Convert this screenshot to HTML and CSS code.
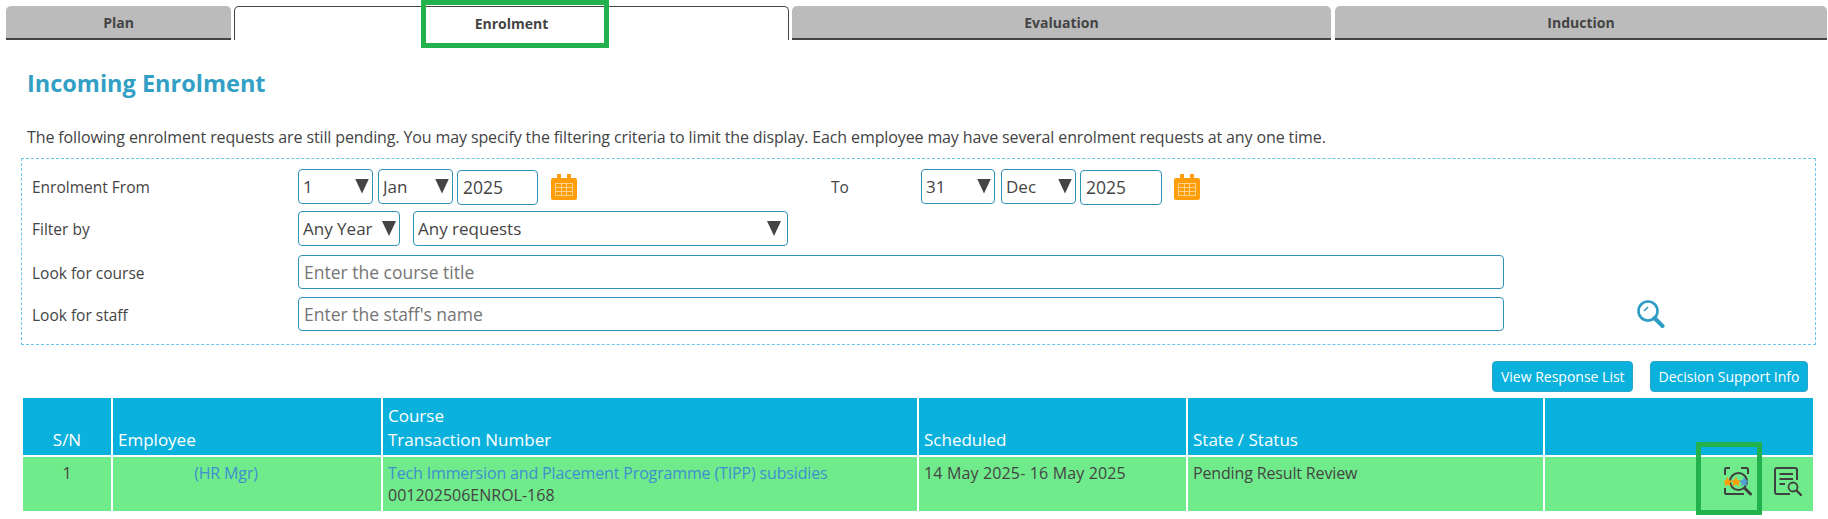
FILE: index.html
```html
<!DOCTYPE html>
<html lang="en">
<head>
<meta charset="utf-8">
<title>Incoming Enrolment</title>
<link rel="stylesheet" href="styles.css">
</head>
<body>
<nav class="tabs">
  <a class="tab tab-plan">Plan</a>
  <a class="tab tab-enrol active">Enrolment</a>
  <a class="tab tab-eval">Evaluation</a>
  <a class="tab tab-induct">Induction</a>
</nav>
<div class="highlight hl-tab"></div>
<h1 class="title">Incoming Enrolment</h1>
<p class="intro">The following enrolment requests are still pending. You may specify the filtering criteria to limit the display. Each employee may have several enrolment requests at any one time.</p>
<form class="filter">
  <div class="row row-date">
    <label class="lbl">Enrolment From</label>
    <div class="sel w-day"><select><option>1</option></select><span class="arrow"></span></div>
    <div class="sel w-mon"><select><option>Jan</option></select><span class="arrow"></span></div>
    <input class="inp w-year" value="2025">
    <svg class="cal" viewBox="0 0 26 26"><path fill="#ff9d0a" d="M6 0h4v4h6V0h4v4h4a2 2 0 0 1 2 2v18a2 2 0 0 1-2 2H2a2 2 0 0 1-2-2V6a2 2 0 0 1 2-2h4z"/><path fill="#ffd28a" d="M4 9h18v13H4z"/><path fill="#ff9d0a" d="M5 10h5v3H5zM11 10h4v3h-4zM16 10h5v3h-5zM5 14h5v3H5zM11 14h4v3h-4zM16 14h5v3h-5zM5 18h5v3H5zM11 18h4v3h-4zM16 18h5v3h-5z"/></svg>
    <label class="lbl lbl-to">To</label>
    <div class="sel w-day2"><select><option>31</option></select><span class="arrow"></span></div>
    <div class="sel w-mon2"><select><option>Dec</option></select><span class="arrow"></span></div>
    <input class="inp w-year2" value="2025">
    <svg class="cal" viewBox="0 0 26 26"><path fill="#ff9d0a" d="M6 0h4v4h6V0h4v4h4a2 2 0 0 1 2 2v18a2 2 0 0 1-2 2H2a2 2 0 0 1-2-2V6a2 2 0 0 1 2-2h4z"/><path fill="#ffd28a" d="M4 9h18v13H4z"/><path fill="#ff9d0a" d="M5 10h5v3H5zM11 10h4v3h-4zM16 10h5v3h-5zM5 14h5v3H5zM11 14h4v3h-4zM16 14h5v3h-5zM5 18h5v3H5zM11 18h4v3h-4zM16 18h5v3h-5z"/></svg>
  </div>
  <div class="row row-filter">
    <label class="lbl">Filter by</label>
    <div class="sel w-any"><select><option>Any Year</option></select><span class="arrow"></span></div>
    <div class="sel w-req"><select><option>Any requests</option></select><span class="arrow"></span></div>
  </div>
  <div class="row row-course">
    <label class="lbl">Look for course</label>
    <input class="inp w-long" placeholder="Enter the course title">
  </div>
  <div class="row row-staff">
    <label class="lbl">Look for staff</label>
    <input class="inp w-long" placeholder="Enter the staff's name">
    <svg class="search" viewBox="0 0 28 28"><circle cx="11" cy="11" r="9.5" fill="none" stroke="#2f9cc4" stroke-width="2.6"/><path d="M17.5 18l8 8" stroke="#2f9cc4" stroke-width="4" stroke-linecap="round"/><path d="M7 11l4-4" stroke="#2f9cc4" stroke-width="1.6"/></svg>
  </div>
</form>
<div class="actions">
  <button class="btn" type="button">View Response List</button>
  <button class="btn" type="button">Decision Support Info</button>
</div>
<table class="grid">
  <colgroup>
    <col class="c1"><col class="c2"><col class="c3"><col class="c4"><col class="c5"><col class="c6">
  </colgroup>
  <thead>
    <tr>
      <th class="center">S/N</th>
      <th>Employee</th>
      <th>Course<br>Transaction Number</th>
      <th>Scheduled</th>
      <th>State / Status</th>
      <th></th>
    </tr>
  </thead>
  <tbody>
    <tr>
      <td class="center">1</td>
      <td class="center cell-emp"><a class="link">(HR Mgr)</a></td>
      <td><a class="link">Tech Immersion and Placement Programme (TIPP) subsidies</a><br>001202506ENROL-168</td>
      <td class="cell-date">14 May 2025- 16 May 2025</td>
      <td class="cell-state">Pending Result Review</td>
      <td class="icons">
        <svg class="act" viewBox="0 0 28 29" fill="none" stroke="#404040" stroke-width="2"><path d="M6 1H2.500a1.500 1.500 0 0 0-1.500 1.500V8M17 1h5.500A1.500 1.500 0 0 1 24 2.500V7M1 21v4.500A1.500 1.500 0 0 0 2.500 27H20"/><circle cx="14.500" cy="14.500" r="8.500" stroke-width="2"/><path d="M20.500 21l6 6" stroke-width="3" stroke-linecap="round"/><path stroke="none" fill="#ff9d0a" d="M3.500 9.500l1.500 3.800 3.500.2-2.700 2.400.9 3.600-3.200-2-3.200 2 .9-3.600L-1.500 13.500l3.500-.2zM12 9.500l1.600 3.800 3.900.2-3 2.400 1 3.600-3.500-2-3.500 2 1-3.600-3-2.400 3.900-.2z"/><path stroke="none" fill="#4f9fd6" d="M20 9.500l1.500 3.800 3.500.2-2.700 2.400.9 3.600-3.200-2-3.200 2 .9-3.600-2.700-2.400 3.500-.2z"/></svg>
        <svg class="act" viewBox="0 0 28 29" fill="none" stroke="#404040" stroke-width="2"><path d="M23 13V3a2 2 0 0 0-2-2H3a2 2 0 0 0-2 2v22a2 2 0 0 0 2 2h13"/><path d="M5.500 7H19M5.500 12H19M5.500 17H11"/><circle cx="19" cy="20" r="4.500" stroke-width="1.800"/><path d="M22.500 23.500l4.500 4.500" stroke-width="2.400" stroke-linecap="round"/></svg>
      </td>
    </tr>
  </tbody>
</table>
<div class="highlight hl-icon"></div>
</body>
</html>
```
FILE: styles.css
```css
* { box-sizing: border-box; }
html, body { margin: 0; padding: 0; background: #fff; }
body {
  position: relative;
  width: 1828px;
  height: 519px;
  overflow: hidden;
  font-family: "Open Sans", "Liberation Sans", sans-serif;
  font-size: 16px;
  color: #444;
}

/* Tabs */
.tabs {
  display: flex;
  height: 40px;
  padding: 6px 0 0 6px;
}
.tab {
  display: flex;
  align-items: center;
  justify-content: center;
  height: 34px;
  background: #bbb;
  border-radius: 5px 5px 0 0;
  border-bottom: 2px solid #444;
  font-size: 14px;
  font-weight: 700;
  color: #444;
}
.tab-plan { width: 225px; margin-right: 3px; }
.tab-enrol { width: 555px; margin-right: 3px; }
.tab-eval { width: 539px; margin-right: 4px; }
.tab-induct { width: 492px; }
.tab.active {
  background: #fff;
  border: 1px solid #444;
  border-bottom: 0;
}

/* Green annotation boxes drawn over the page */
.highlight { position: absolute; border: 5px solid #22b14c; }
.hl-tab { left: 421px; top: 0; width: 188px; height: 48px; }
.hl-icon { left: 1696px; top: 442px; width: 66px; height: 73px; }

/* Heading */
.title {
  margin: 25px 0 0 27px;
  font-size: 23.500px;
  line-height: 36px;
  font-weight: 700;
  color: #329fc4;
}
.intro {
  margin: 26px 0 0 27px;
  font-size: 16px;
  line-height: 20px;
  letter-spacing: -0.12px;
  color: #444;
}

/* Filter panel */
.filter {
  width: 1795px;
  height: 187px;
  margin: 11px 0 0 21px;
  padding: 9px 0 0 10px;
  border: 1px dashed #6cc5ea;
}
.row { display: flex; align-items: center; }
.row-date { height: 36px; }
.row-filter { height: 35px; margin-top: 7px; }
.row-course { height: 34px; margin-top: 9px; }
.row-staff { height: 34px; margin-top: 8px; }
.lbl { width: 266px; flex: none; padding-top: 1px; font-size: 15.500px; color: #444; }
.lbl-to { width: 90px; margin-left: 254px; }

.sel { position: relative; height: 35px; flex: none; margin-right: 5px; }
.sel select {
  appearance: none;
  width: 100%;
  height: 100%;
  padding: 0 0 0 4px;
  border: 1px solid #2f93b8;
  border-radius: 4px;
  background: #fff;
  font: 17px "Open Sans", "Liberation Sans", sans-serif;
  color: #444;
}
.arrow {
  position: absolute;
  right: 4px;
  top: 10px;
  width: 14px;
  height: 15px;
  background: #444;
  clip-path: polygon(0 0, 100% 0, 50% 100%);
  pointer-events: none;
}
.w-day { width: 75px; }
.w-mon { width: 75px; margin-right: 4px; }
.w-day2 { width: 74px; margin-right: 6px; }
.w-mon2 { width: 75px; margin-right: 4px; }
.w-any { width: 102px; margin-right: 13px; }
.w-req { width: 375px; margin-right: 0; }
.w-req .arrow { right: 7px; }

.inp {
  height: 35px;
  flex: none;
  padding: 0 5px;
  border: 1px solid #2f93b8;
  border-radius: 4px;
  background: #fff;
  font: 17.500px "Open Sans", "Liberation Sans", sans-serif;
  color: #444;
}
.inp::placeholder { color: #757575; opacity: 1; }
.w-year { width: 81px; margin-top: 2px; }
.w-year2 { width: 82px; margin-top: 2px; }
.w-long { width: 1206px; height: 34px; }
.cal { width: 26px; height: 26px; flex: none; margin-left: 13px; margin-top: 2px; }
.w-year2 + .cal { margin-left: 12px; }
.search { width: 28px; height: 28px; flex: none; margin-left: 133px; }

/* Buttons */
.actions {
  display: flex;
  justify-content: flex-end;
  gap: 17px;
  width: 1808px;
  margin-top: 16px;
}
.btn {
  height: 31px;
  padding: 0 7.500px;
  border: 1px solid #2aa5cc;
  border-radius: 4px;
  background: #0bb1dd;
  color: #fff;
  font: 500 14px "Open Sans", "Liberation Sans", sans-serif;
}

/* Table */
.grid {
  width: 1790px;
  margin: 6px 0 0 23px;
  border-collapse: collapse;
  table-layout: fixed;
}
.c1 { width: 89px; }
.c2 { width: 270px; }
.c3 { width: 536px; }
.c4 { width: 269px; }
.c5 { width: 357px; }
.c6 { width: 269px; }
.grid th {
  height: 58px;
  padding: 0 5px 3px;
  background: #0bb1dd;
  color: #fff;
  font-size: 17px;
  font-weight: 400;
  line-height: 24px;
  text-align: left;
  vertical-align: bottom;
  border-left: 2px solid #fff;
  border-bottom: 2px solid #fff;
}
.grid td {
  height: 55px;
  padding: 5px 5px 0;
  background: #70eb8b;
  font-size: 16px;
  line-height: 22px;
  color: #444;
  vertical-align: top;
  border-left: 2px solid #fff;
}
.grid th:first-child, .grid td:first-child { border-left: 0; }
.grid .center { text-align: center; }
.grid .cell-emp { padding-right: 47px; }
.cell-date { letter-spacing: 0.15px; }
.cell-state { letter-spacing: -0.15px; }
.link { color: #3f8fd0; letter-spacing: -0.15px; }
.grid .icons {
  padding: 10px 11px 0 0;
  text-align: right;
  white-space: nowrap;
  font-size: 0;
}
.act { width: 28px; height: 29px; margin-left: 22px; }
```
